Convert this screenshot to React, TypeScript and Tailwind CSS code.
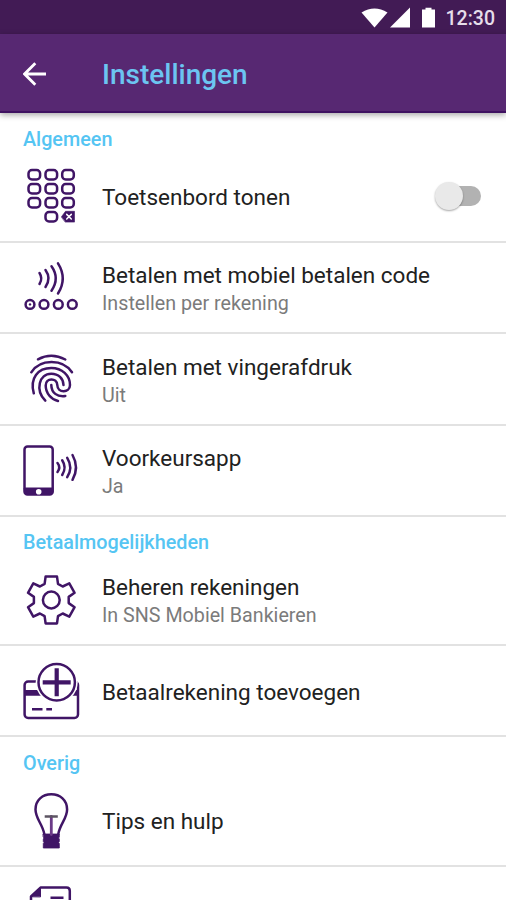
import type { ReactNode } from 'react';
import clsx from 'clsx';

// icons share a 64x64 box
function Icon({ children }: { children: ReactNode }) {
  return (
    <svg
      viewBox="0 0 64 64"
      className="ml-5 mr-[18px] h-16 w-16 shrink-0 text-[#401566]"
      fill="none"
      stroke="currentColor"
      strokeWidth="2.5"
      strokeLinecap="round"
      strokeLinejoin="round"
      aria-hidden="true"
    >
      {children}
    </svg>
  );
}

function KeypadIcon() {
  const keys = [10.7, 24.7, 38.7].flatMap((y) => [14.3, 31.3, 48].map((x) => [x, y]));
  keys.push([31.3, 52.7]);
  return (
    <Icon>
      {keys.map(([x, y]) => (
        <rect key={`${x}-${y}`} x={x - 5.8} y={y - 4.7} width="11.6" height="9.4" rx="3.5" />
      ))}
      <path d="M41.5 52.7L45.5 47.3H54.5V58.1H45.5Z" fill="currentColor" strokeWidth="0.6" />
      <path d="M46.7 50.4L51.3 55M51.3 50.4L46.7 55" stroke="#fff" strokeWidth="1.5" />
    </Icon>
  );
}

function PayCodeIcon() {
  return (
    <Icon>
      <path d="M19.5 17Q23 22.4 19.5 28M25.5 14Q31.5 22.4 25.5 31M31.5 10.3Q40 22.4 31.5 34.7M38 7.3Q47.5 22.4 38 37.5" />
      {[10, 24, 38.3, 52.3].map((x) => (
        <circle key={x} cx={x} cy="48.4" r="4.4" />
      ))}
      <circle cx="10" cy="48.4" r="1.2" fill="currentColor" stroke="none" />
    </Icon>
  );
}

function FingerprintIcon() {
  return (
    <Icon>
      <path d="M18 12.3Q31.5 5 45.3 12.5" />
      <path d="M11.3 25.3C20 11.5 43 11.5 52 25.3" />
      <path d="M13.8 46.3C9.5 31 18 21 31.3 21C42 21 50 28.5 50 38C50 46 37.5 46.5 37.3 38C37 30.5 25.7 30.5 25.7 38.5C25.7 46 31 52.3 38 54" />
      <path d="M25.3 53.7C15 43 19 26.7 31.3 26.7C38.5 26.7 43.3 31.5 43.5 38" />
      <path d="M31.3 38C31.5 46 37 50 45.3 49" />
    </Icon>
  );
}

function PhoneIcon() {
  return (
    <Icon>
      <rect x="4.5" y="7.4" width="28.2" height="48" rx="3" />
      <path d="M4.5 49H32.7V53.3Q32.7 55.4 30 55.4H7Q4.5 55.4 4.5 53Z" fill="currentColor" strokeWidth="1" />
      <circle cx="18.7" cy="52.8" r="2.8" fill="#fff" stroke="none" />
      <path d="M37.5 24Q41 28.5 37.5 33M42.2 21.3Q47 28.5 42.2 36M47.2 18.8Q53.3 28.5 47.2 38.2M52.5 16Q59.5 28.5 52.5 40.8" />
    </Icon>
  );
}

function GearIcon() {
  return (
    <Icon>
      <circle cx="31.3" cy="33" r="8.4" />
      <path d="M25.6 9.6H37L38 16.8L42.7 19.5L49.3 16.4L54.6 25.8L48.7 29.9V36.1L54.6 40.2L49.3 49.6L42.7 46.5L38 49.2L37 56.4H25.6L24.6 49.2L19.9 46.5L13.3 49.6L8 40.2L13.9 36.1V29.9L8 25.8L13.3 16.4L19.9 19.5L24.6 16.8Z" />
    </Icon>
  );
}

function CardPlusIcon() {
  return (
    <Icon>
      <rect x="4.6" y="22.6" width="53.4" height="36.4" rx="3.5" />
      <path d="M4.6 31H58V36.7H4.6Z" fill="currentColor" stroke="none" />
      <path d="M12 50.3H22.5M26.3 50.3H32" strokeLinecap="butt" />
      <circle cx="36.7" cy="23.3" r="21" fill="#fff" stroke="none" />
      <circle cx="36.7" cy="23.3" r="18.2" strokeWidth="2.5" />
      <path d="M36.7 9.3V37.3M22.7 23.3H50.7" strokeWidth="4.2" strokeLinecap="butt" />
    </Icon>
  );
}

function BulbIcon() {
  return (
    <Icon>
      <path d="M24.3 46C22.5 36 15.5 30.5 15.5 21.5C15.5 12 22.5 6.3 31.3 6.3S47.1 12 47.1 21.5C47.1 30.5 40 36 38.3 46" />
      <path d="M23.3 46H39.3V49L38.6 50L39.3 51V53.5L38.6 54.5L39.3 55.5V60H23.3V55.5L24 54.5L23.3 53.5V51L24 50L23.3 49Z" fill="currentColor" strokeWidth="0.8" />
      <path d="M31.3 28.5V46.5" strokeWidth="2.8" stroke="#6b3a87" />
      <path d="M24.7 28.5H37.8" stroke="#5c5562" strokeLinecap="butt" />
    </Icon>
  );
}

function DocumentIcon() {
  return (
    <Icon>
      <path d="M11 62V16.5L20.5 7.6H46.5Q49.8 7.6 49.8 11V62" />
      <path d="M11 16.5L20.5 7.6V16.5Z" fill="currentColor" strokeWidth="1" />
      <path d="M30.5 17.7H43.5M20 28H43.5" strokeLinecap="butt" />
    </Icon>
  );
}

function SectionLabel({ title, className }: { title: string; className?: string }) {
  return <h2 className={clsx('pl-[23px] text-[19.8px] font-medium text-[#55c5f3]', className)}>{title}</h2>;
}

type RowProps = {
  icon: ReactNode;
  title?: string;
  subtitle?: string;
  className?: string;
  children?: ReactNode;
};

function Row({ icon, title, subtitle, className, children }: RowProps) {
  return (
    <div className={clsx('flex items-center border-b-2 border-[#e2e2e2]', className)}>
      {icon}
      <div className={clsx('flex-1', subtitle ? 'pt-1' : 'pt-[3px]')}>
        <p className="text-[22.5px] leading-[29px] text-[#212121]">{title}</p>
        {subtitle && <p className="text-[19.7px] leading-[28px] text-[#7b7b7b]">{subtitle}</p>}
      </div>
      {children}
    </div>
  );
}

function Toggle() {
  return (
    <button type="button" role="switch" aria-checked="false" aria-label="Toetsenbord tonen" className="relative mr-[25px] h-5 w-[46px]">
      <span className="absolute right-0 top-0 h-5 w-9 rounded-full bg-[#b2b2b2]" />
      <span className="absolute -top-1 left-0 h-7 w-7 rounded-full bg-[#e9e9e9] shadow-[0_1px_2px_rgba(0,0,0,0.35)]" />
    </button>
  );
}

function StatusBar() {
  return (
    <div className="flex h-[34px] items-center justify-end bg-[#421b55] pr-[11px] text-white">
      <svg viewBox="0 0 76 22" className="mr-[9px] mt-0.5 h-[22px] w-[76px]" fill="currentColor" aria-hidden="true">
        <path d="M0.5 5.5Q13.5 -2.5 26.5 5.5L13.5 20.5Z" />
        <path d="M29 20.5L49 0.5V20.5Z" />
        <path d="M61 2.5H64.5V0.8H70.5V2.5H74V20.5H61Z" />
      </svg>
      <span className="pt-[3px] text-[19.5px] font-medium leading-none text-[#e6deea]">12:30</span>
    </div>
  );
}

export default function App() {
  return (
    <div className="h-[900px] w-[506px] overflow-hidden bg-white font-[Roboto,sans-serif]">
      <StatusBar />
      <header className="relative flex h-[79px] items-center border-b-2 border-[#3f1261] bg-[#572872] pt-0.5 shadow-[0_2px_6px_rgba(0,0,0,0.35)]">
        <svg viewBox="0 0 24 24" className="ml-[23px] mr-[55px] h-6 w-6 text-white" fill="none" stroke="currentColor" strokeWidth="2.8" aria-label="Terug">
          <path d="M23 12H2M12.3 1.3L1.6 12L12.3 22.7" />
        </svg>
        <h1 className="pt-0.5 text-[28px] font-medium text-[#6cc5f1]">Instellingen</h1>
      </header>
      <main>
        <SectionLabel title="Algemeen" className="h-[38px] leading-[53px]" />
        <Row icon={<KeypadIcon />} title="Toetsenbord tonen" className="h-[92px]">
          <Toggle />
        </Row>
        <Row icon={<PayCodeIcon />} title="Betalen met mobiel betalen code" subtitle="Instellen per rekening" className="h-[91px]" />
        <Row icon={<FingerprintIcon />} title="Betalen met vingerafdruk" subtitle="Uit" className="h-[92px]" />
        <Row icon={<PhoneIcon />} title="Voorkeursapp" subtitle="Ja" className="h-[91px]" />
        <SectionLabel title="Betaalmogelijkheden" className="h-[37px] leading-[52px]" />
        <Row icon={<GearIcon />} title="Beheren rekeningen" subtitle="In SNS Mobiel Bankieren" className="h-[92px]" />
        <Row icon={<CardPlusIcon />} title="Betaalrekening toevoegen" className="h-[91px]" />
        <SectionLabel title="Overig" className="h-[38px] leading-[53px]" />
        <Row icon={<BulbIcon />} title="Tips en hulp" className="h-[92px]" />
        <Row icon={<DocumentIcon />} className="h-[91px]" />
      </main>
    </div>
  );
}
